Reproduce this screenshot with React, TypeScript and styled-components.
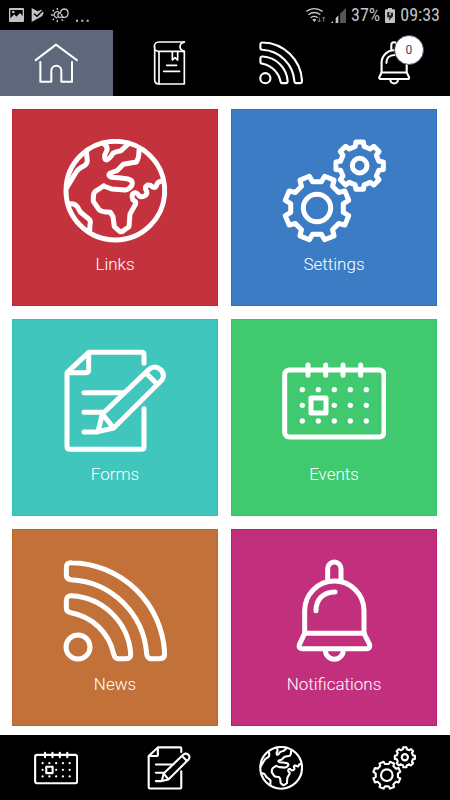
import React from 'react'
import styled, { createGlobalStyle } from 'styled-components'

const GlobalStyle = createGlobalStyle`
  * {
    box-sizing: border-box;
  }

  body {
    margin: 0;
    background: #fff;
    font-family: Roboto, 'Liberation Sans', sans-serif;
  }
`

const Page = styled.div`
  min-height: 100vh;
  display: flex;
  flex-direction: column;
`

const StatusBar = styled.div`
  height: 30px;
  padding: 0 10px 0 9px;
  display: flex;
  justify-content: space-between;
  align-items: center;
  background: #000;
  color: #c2c2c2;
  font-family: 'Roboto Condensed', Roboto, 'Liberation Sans', sans-serif;
  font-size: 18px;
  line-height: 20px;
`

const StatusGroup = styled.div<{ $gap: number }>`
  display: flex;
  align-items: center;
  gap: ${({ $gap }) => $gap}px;
`

const NavBar = styled.nav<{ $height: number }>`
  height: ${({ $height }) => $height}px;
  display: grid;
  grid-template-columns: repeat(4, 1fr);
  background: #000;
`

const NavLink = styled.a<{ $active?: boolean }>`
  display: flex;
  justify-content: center;
  align-items: center;
  color: #fff;
  background: ${({ $active }) => ($active ? '#5f677a' : 'transparent')};
`

const BadgeAnchor = styled.span`
  position: relative;
  display: flex;
`

const Badge = styled.span`
  position: absolute;
  top: -6px;
  right: -8px;
  width: 30px;
  height: 30px;
  display: flex;
  justify-content: center;
  align-items: center;
  border: 1px solid #4a5470;
  border-radius: 50%;
  background: #fff;
  color: #3c4660;
  font-size: 12px;
  line-height: 14px;
`

const Tiles = styled.main`
  flex: 1;
  padding: 13px 13px 9px 12px;
  display: grid;
  grid-template-columns: 1fr 1fr;
  grid-auto-rows: 1fr;
  gap: 13px;
`

const Tile = styled.a<{ $color: string; $edge: string }>`
  padding-bottom: 2px;
  display: flex;
  flex-direction: column;
  align-items: center;
  justify-content: center;
  gap: 10px;
  border: 1px solid ${({ $edge }) => $edge};
  background: ${({ $color }) => $color};
  color: #fff;
  text-decoration: none;
`

const TileLabel = styled.span`
  font-size: 17px;
  font-weight: 300;
  line-height: 22px;
`

const Drawing = styled.svg`
  display: block;
  fill: none;
  stroke: currentColor;
  stroke-width: 15px;
  stroke-linecap: round;
  stroke-linejoin: round;
`

const Glyph = styled.svg`
  display: block;
  fill: currentColor;
`

type IconProps = {
  size: number
}

const gearPath = (cx: number, cy: number, tip: number, base: number, turn: number) => {
  const points: string[] = []
  for (let i = 0; i < 8; i++) {
    const corners = [
      [-13, base],
      [-9, tip],
      [9, tip],
      [13, base],
    ]
    corners.forEach(([offset, r]) => {
      const a = ((i * 45 + turn + offset) * Math.PI) / 180
      points.push(`${(cx + r * Math.cos(a)).toFixed(1)},${(cy + r * Math.sin(a)).toFixed(1)}`)
    })
  }
  return `M${points.join('L')}Z`
}

const GlobeIcon = ({ size }: IconProps) => (
  <Drawing width={size} height={size} viewBox="40 27 312 312">
    <circle cx="197" cy="182" r="148" />
    <path d="M162 168L186 177L226 180Q238 178 246 167Q252 154 240 149Q232 145 186 142Q172 137 182 129L202 122L221 103L260 96Q268 84 268 62" />
    <path d="M162 168L137 184Q131 190 131 202V214L148 239Q154 245 182 247L190 260L194 290L210 304Q216 308 224 300L238 290L241 252L258 222Q260 214 250 210Q242 192 256 188Q262 188 268 197Q274 203 284 198Q294 194 291 184Q282 172 294 165Q302 164 308 170Q320 176 322 162Q326 154 338 154" />
    <path d="M163 42Q174 48 172 60L165 76Q164 88 170 90Q178 90 190 70Q198 64 214 62L234 44" />
    <path d="M110 66L113 92Q112 102 104 107Q84 116 76 132L52 172" />
    <path d="M56 222Q76 218 84 232L92 246L119 268Q124 274 121 284L120 302" />
  </Drawing>
)

const GearsIcon = ({ size }: IconProps) => (
  <Drawing width={size} height={size} viewBox="36 27 312 312">
    <path d={gearPath(141, 234, 98, 80, 22.5)} />
    <circle cx="141" cy="234" r="41" />
    <path d={gearPath(269, 107, 72, 59, 0)} />
    <circle cx="269" cy="107" r="22" />
  </Drawing>
)

const FormIcon = ({ size }: IconProps) => (
  <Drawing width={size} height={size} viewBox="40 27 312 312">
    <path d="M283 70V44Q283 37 276 37H117L52 98V319Q52 328 61 328H275Q283 328 283 320V206" />
    <path d="M117 40V90Q117 98 109 98H55" />
    <path d="M103 158H222M103 217H160M103 276H143" />
    <path d="M158 222L298 88Q315 74 332 88Q348 104 336 121L192 264L145 275ZL192 264M288 98L322 132" />
  </Drawing>
)

const CalendarIcon = ({ size }: IconProps) => (
  <Drawing width={size} height={size} viewBox="36 27 312 312">
    <rect x="44" y="90" width="298" height="201" rx="14" />
    <path d="M114 75V106M167 75V106M219 75V106M272 75V106" />
    <rect x="123" y="174" width="45" height="45" />
    {[149, 196, 243].map((y) =>
      [97, 145, 193, 241, 289]
        .filter((x) => !(x === 145 && y === 196))
        .map((x) => <circle key={`${x}-${y}`} cx={x} cy={y} r="8" fill="currentColor" stroke="none" />)
    )}
  </Drawing>
)

const FeedIcon = ({ size }: IconProps) => (
  <Drawing width={size} height={size} viewBox="40 27 312 312">
    <circle cx="85" cy="291" r="36" />
    <path d="M50 52Q50 37 66 38A285 285 0 0 1 345 312Q345 326 330 326H304Q293 326 291 312A240 240 0 0 0 64 89Q50 87 50 74Z" />
    <path d="M50 152Q50 136 66 137A188 188 0 0 1 243 310Q244 326 230 326H206Q195 326 192 312A160 160 0 0 0 64 188Q50 186 50 174Z" />
  </Drawing>
)

const BellIcon = ({ size }: IconProps) => (
  <Drawing width={size} height={size} viewBox="36 27 312 312">
    <path d="M173 92V56A20 20 0 0 1 213 56V92" />
    <path d="M104 250V182A89 89 0 0 1 282 182V250" />
    <path d="M104 250H282L299 284Q301 296 290 296H96Q85 296 88 284Z" />
    <path d="M166 300A27 28 0 0 0 220 300" />
    <path d="M138 182C138 150 158 126 195 126" />
  </Drawing>
)

const HomeIcon = ({ size }: IconProps) => (
  <Drawing width={size} height={size} viewBox="103 123 132 132">
    <g strokeWidth="6">
      <path strokeLinecap="butt" d="M106 182L169 134L234 182" />
      <path d="M122 186V245H155V212A15 15 0 0 1 185 212V245H217V186" />
    </g>
  </Drawing>
)

const BookIcon = ({ size }: IconProps) => (
  <Drawing width={size} height={size} viewBox="440 123 132 132">
    <g strokeWidth="5">
      <path d="M552 126H475A13 14 0 0 0 475 154H552V252H476Q463 251 463 240V140" />
      <path d="M476 156V252M552 126Q539 130 539 140Q539 150 552 154" />
      <path d="M516 156V180L524 173L532 180V156M499 196H529M490 214H538" />
    </g>
  </Drawing>
)

const PictureGlyph = () => (
  <Glyph width="15" height="14" viewBox="0 0 45 42">
    <path
      fillRule="evenodd"
      d="M3 0H42Q45 0 45 3V39Q45 42 42 42H3Q0 42 0 39V3Q0 0 3 0ZM4 31L16 19L22 26L33 15L41 24V6H4ZM9 12a4 4 0 1 0 8 0a4 4 0 1 0 -8 0Z"
    />
  </Glyph>
)

const PlayCheckGlyph = () => (
  <Glyph width="13" height="14" viewBox="0 0 39 42">
    <path d="M2 0L20 10L31 5L38 14L34 24L2 42Z" />
    <path d="M9 17L18 25L35 8" fill="none" stroke="#000" strokeWidth="4" />
  </Glyph>
)

const WeatherGlyph = () => (
  <Glyph width="18" height="14" viewBox="0 0 54 42">
    <g fill="none" stroke="currentColor" strokeWidth="4">
      <path d="M20 29A9 9 0 1 1 25 14M19 0V6M19 36V42M5 6L9 10M0 21H7M5 36L9 32M32 34L36 38" />
      <path d="M40 28H24A7 7 0 0 1 28 15Q30 3 41 3Q51 4 51 15Q51 28 40 28Q32 27 31 18" />
    </g>
  </Glyph>
)

const DotsGlyph = () => (
  <Glyph width="13" height="14" viewBox="0 0 39 42">
    <path d="M0 35h6v6h-6zM16 35h6v6h-6zM32 35h6v6h-6z" />
  </Glyph>
)

const WifiGlyph = () => (
  <Glyph width="20" height="15" viewBox="0 0 60 45">
    <g fill="none" stroke="currentColor" strokeWidth="4">
      <path d="M1 10Q25 -6 50 10M7 20Q25 7 43 20M14 29Q25 21 35 29" />
    </g>
    <path d="M19 35Q25 30 31 35L25 42Z" />
    <path d="M40 28V42M35 37L40 42L45 37M53 42V27M48 32L53 27L58 32" fill="none" stroke="#777" strokeWidth="3" />
  </Glyph>
)

const SignalGlyph = () => (
  <Glyph width="15" height="15" viewBox="0 0 45 45">
    <path d="M0 45L6 38V45ZM14 31L22 22V45H14Z" />
    <path d="M27 17L45 0V45H27Z" fill="#555" />
  </Glyph>
)

const BatteryGlyph = () => (
  <Glyph width="10" height="15" viewBox="0 0 30 45">
    <path d="M9 0H21V4H27Q30 4 30 7V42Q30 45 27 45H3Q0 45 0 42V7Q0 4 3 4H9Z" />
    <path d="M7 12H14L12 22H18L17 14H24V25L11 38L13 28H6Z" fill="#222" />
  </Glyph>
)

const tiles = [
  { label: 'Links', color: '#c4323d', edge: '#bd2632', Icon: GlobeIcon },
  { label: 'Settings', color: '#3c7cc4', edge: '#3071bd', Icon: GearsIcon },
  { label: 'Forms', color: '#40c6bd', edge: '#32bfb5', Icon: FormIcon },
  { label: 'Events', color: '#41c970', edge: '#33c264', Icon: CalendarIcon },
  { label: 'News', color: '#c27139', edge: '#bc652a', Icon: FeedIcon },
  { label: 'Notifications', color: '#c2307d', edge: '#b91f70', Icon: BellIcon },
]

const App: React.FC = () => (
  <Page>
    <GlobalStyle />
    <StatusBar>
      <StatusGroup $gap={7}>
        <PictureGlyph />
        <PlayCheckGlyph />
        <WeatherGlyph />
        <DotsGlyph />
      </StatusGroup>
      <StatusGroup $gap={5}>
        <WifiGlyph />
        <SignalGlyph />
        <span>37%</span>
        <BatteryGlyph />
        <span>09:33</span>
      </StatusGroup>
    </StatusBar>
    <NavBar $height={66} aria-label="Top">
      <NavLink href="#home" aria-label="Home" $active>
        <HomeIcon size={44} />
      </NavLink>
      <NavLink href="#directory" aria-label="Directory">
        <BookIcon size={44} />
      </NavLink>
      <NavLink href="#news" aria-label="News">
        <FeedIcon size={44} />
      </NavLink>
      <NavLink href="#notifications" aria-label="Notifications">
        <BadgeAnchor>
          <BellIcon size={44} />
          <Badge>0</Badge>
        </BadgeAnchor>
      </NavLink>
    </NavBar>
    <Tiles>
      {tiles.map(({ label, color, edge, Icon }) => (
        <Tile key={label} href={`#${label.toLowerCase()}`} $color={color} $edge={edge}>
          <Icon size={104} />
          <TileLabel>{label}</TileLabel>
        </Tile>
      ))}
    </Tiles>
    <NavBar $height={65} aria-label="Bottom">
      <NavLink href="#events" aria-label="Events">
        <CalendarIcon size={44} />
      </NavLink>
      <NavLink href="#forms" aria-label="Forms">
        <FormIcon size={44} />
      </NavLink>
      <NavLink href="#links" aria-label="Links">
        <GlobeIcon size={44} />
      </NavLink>
      <NavLink href="#settings" aria-label="Settings">
        <GearsIcon size={44} />
      </NavLink>
    </NavBar>
  </Page>
)

export default App
